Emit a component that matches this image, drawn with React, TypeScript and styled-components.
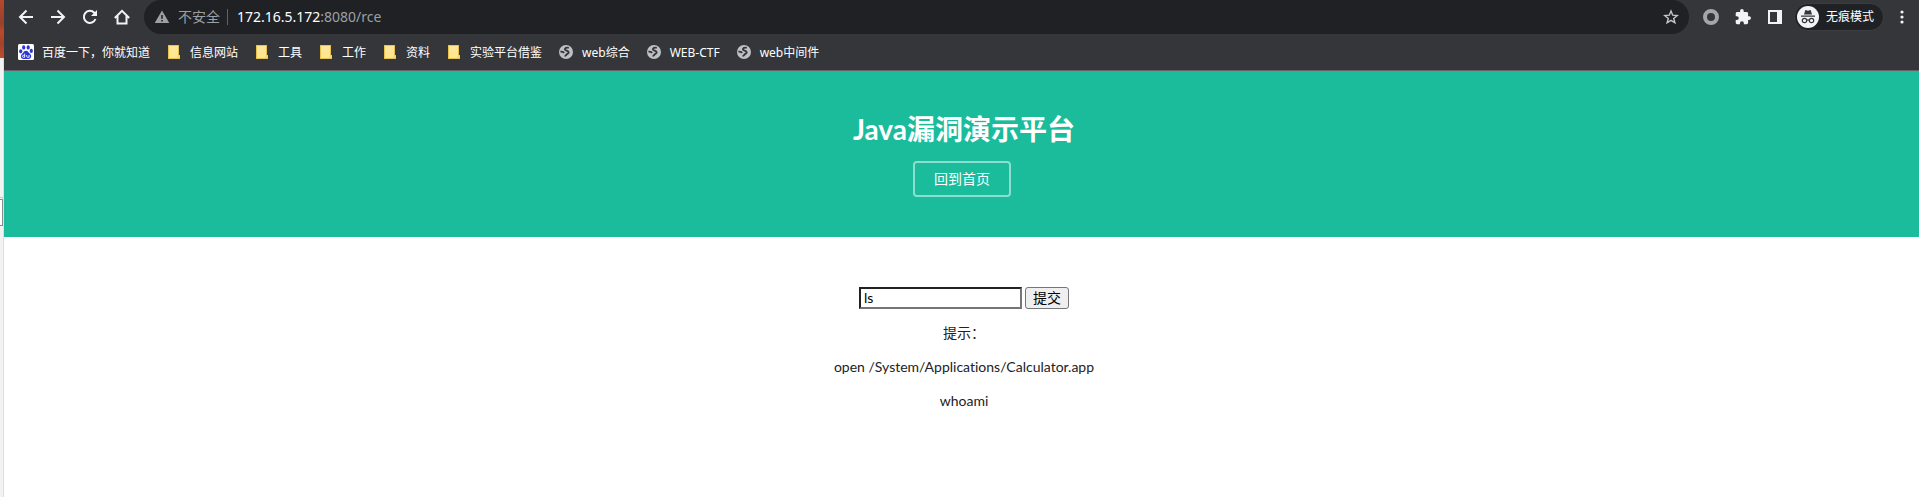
import React from "react";
import styled, { createGlobalStyle } from "styled-components";

const uiFont = `"Noto Sans", "Noto Sans CJK SC", sans-serif`;
const pageFont = `Lato, "Noto Sans CJK SC", sans-serif`;

const GlobalStyle = createGlobalStyle`
  * { box-sizing: border-box; }
  body { margin: 0; background: #fff; overflow-x: hidden; }
`;

const Desktop = styled.div`
  display: flex;
  min-height: 100vh;
`;

const BehindWindow = styled.div`
  flex: 0 0 4px;
  min-width: 0;
  background: linear-gradient(to right, #f2f2f2 3px, #dedede 3px);
`;

const BehindBanner = styled.div`
  height: 58px;
  background: linear-gradient(#b5482b, #98412b 40%, #b94a2c 55%, #a3432b 75%, #c14c2d);
`;

const BehindField = styled.div`
  margin-top: 139px;
  height: 27px;
  width: 3px;
  border-top: 1px solid #c8c8c8;
  padding-top: 1px;

  &::after {
    content: "";
    display: block;
    height: 25px;
    background: #fff;
    border: 1px solid #8a8a8a;
    border-left: 0;
  }
`;

const BrowserWindow = styled.div`
  flex: 1;
  min-width: 0;
  background: #fff;
`;

const Toolbar = styled.div`
  display: flex;
  align-items: center;
  height: 34px;
  background: #35363a;
  padding: 0 9px 0 14px;
`;

const NavButtons = styled.div`
  display: flex;
  gap: 16px;
  margin-right: 14px;
`;

const IconButton = styled.button`
  display: flex;
  align-items: center;
  justify-content: center;
  width: 16px;
  height: 16px;
  padding: 0;
  border: 0;
  background: none;
  color: #f1f3f4;
`;

const AddressBar = styled.div`
  flex: 1;
  display: flex;
  align-items: center;
  height: 34px;
  padding: 0 10px;
  border-radius: 17px;
  background: #202124;
  color: #9aa0a6;
  font: 14px/20px ${uiFont};
  white-space: nowrap;
`;

const SecurityLabel = styled.span`
  margin-left: 8px;
  padding-right: 7px;
`;

const Separator = styled.span`
  width: 1px;
  height: 16px;
  margin-right: 9px;
  background: #5f6368;
`;

const Url = styled.span`
  flex: 1;
`;

const Host = styled.span`
  color: #fff;
`;

const Extensions = styled.div`
  display: flex;
  gap: 16px;
  margin: 0 11px 0 14px;
`;

const IncognitoBadge = styled.button`
  display: flex;
  align-items: center;
  gap: 7px;
  height: 28px;
  margin-right: 10px;
  padding: 0 9px 0 2px;
  border: 1px solid #3c3d41;
  border-radius: 14px;
  background: #202124;
  color: #fff;
  font: 12px/16px ${uiFont};
  white-space: nowrap;
`;

const Bookmarks = styled.nav`
  display: flex;
  align-items: center;
  gap: 16px;
  height: 37px;
  padding: 0 14px;
  background: #35363a;
  border-bottom: 1px solid #66606a;
`;

const Bookmark = styled.a`
  display: flex;
  align-items: center;
  gap: 8px;
  color: #fff;
  font: 12px/18px ${uiFont};
  text-decoration: none;
  white-space: nowrap;
`;

const BookmarkLabel = styled.span`
  padding-top: 2px;
`;

const Hero = styled.header`
  display: flex;
  flex-direction: column;
  align-items: center;
  height: 166px;
  padding: 38px 0 0 5px;
  background: #1abc9c;
  color: #fff;
  font-family: ${pageFont};
`;

const Title = styled.h1`
  margin: 0 0 12px;
  font-size: 28px;
  line-height: 40px;
  font-weight: 700;
`;

const HomeLink = styled.a`
  margin-right: 4px;
  padding: 6px 19px;
  border: 2px solid rgba(255, 255, 255, 0.5);
  border-radius: 4px;
  color: #fff;
  font-size: 14px;
  line-height: 20px;
  text-decoration: none;
`;

const Content = styled.main`
  padding: 50px 0 0 5px;
  color: #222;
  font: 14px/20px ${pageFont};
  font-variant-ligatures: none;
  text-align: center;
`;

const CommandForm = styled.form`
  display: flex;
  justify-content: center;
  gap: 3px;
  margin-bottom: 14px;
`;

const CommandInput = styled.input`
  width: 163px;
  height: 22px;
  padding: 0 3px 1px;
  border: 2px inset #767676;
  background: #fff;
  color: #000;
  font: 14px/16px ${pageFont};
  outline: 0;
`;

const SubmitButton = styled.button`
  height: 22px;
  padding: 0 7px;
  border: 1px solid #767676;
  border-radius: 3px;
  background: #efefef;
  color: #000;
  font: 14px/18px ${pageFont};
`;

const Hint = styled.p`
  margin: 0 0 14px;
`;

const line = { fill: "none", stroke: "currentColor", strokeWidth: 2 };

const BackIcon = () => (
  <svg width="16" height="16" viewBox="0 0 16 16" {...line}><path d="M15 8H2.5M8.5 1.5 2 8l6.500 6.500" /></svg>
);
const ForwardIcon = () => (
  <svg width="16" height="16" viewBox="0 0 16 16" {...line}><path d="M1 8h12.500M7.500 1.500 14 8l-6.500 6.500" /></svg>
);
const ReloadIcon = () => (
  <svg width="16" height="16" viewBox="0 0 16 16" {...line}>
    <path d="M13.500 10A6 6 0 1 1 12.300 3.800L14 5.500" />
    <path d="M15 1v6H9z" fill="currentColor" stroke="none" />
  </svg>
);
const HomeIcon = () => (
  <svg width="16" height="16" viewBox="0 0 16 16" {...line}><path d="M.8 9 8 1.800 15.200 9M3.500 7v7.500h9V7" /></svg>
);
const WarningIcon = () => (
  <svg width="16" height="16" viewBox="0 0 16 16">
    <path d="M8 1.500 15.300 14H.7z" fill="#9aa0a6" />
    <path d="M7.200 6h1.600v3.800H7.200zM7.200 11h1.600v1.600H7.200z" fill="#202124" />
  </svg>
);
const StarIcon = () => (
  <svg width="16" height="16" viewBox="0 0 16 16" fill="none" stroke="#c4c7ca" strokeWidth="1.400">
    <path d="m8 2 1.700 4.200 4.500.3-3.500 2.900 1.200 4.400L8 11.400l-3.900 2.400 1.200-4.400L1.800 6.500l4.500-.3z" />
  </svg>
);
const RingIcon = () => (
  <svg width="16" height="16" viewBox="0 0 16 16"><circle cx="8" cy="8" r="6" fill="none" stroke="#a6a6a6" strokeWidth="4" /></svg>
);
const PuzzleIcon = () => (
  <svg width="16" height="16" viewBox="1 1 22 22" fill="#f1f3f4">
    <path d="M20.500 11H19V7c0-1.100-.9-2-2-2h-4V3.500a2.500 2.500 0 0 0-5 0V5H4c-1.100 0-2 .9-2 2v3.800h1.500a2.700 2.700 0 0 1 0 5.400H2V20c0 1.100.9 2 2 2h3.800v-1.500a2.700 2.700 0 0 1 5.400 0V22H17c1.100 0 2-.9 2-2v-4h1.500a2.500 2.500 0 0 0 0-5z" />
  </svg>
);
const PanelIcon = () => (
  <svg width="16" height="16" viewBox="0 0 16 16"><path fillRule="evenodd" fill="#f1f3f4" d="M1 1h14v14H1zM3 3v10h7V3z" /></svg>
);
const IncognitoIcon = () => (
  <svg width="22" height="22" viewBox="0 0 22 22">
    <circle cx="11" cy="11" r="11" fill="#f1f3f4" />
    <path d="M7 8.500 8.300 4l2.700.7 2.700-.7L15 8.500zM4 9.500h14v1.300H4z" fill="#35363a" />
    <g fill="none" stroke="#35363a" strokeWidth="1.200">
      <circle cx="7.500" cy="14.500" r="2.200" /><circle cx="14.500" cy="14.500" r="2.200" /><path d="M9.700 14.200q1.300-.8 2.600 0" />
    </g>
  </svg>
);
const MenuIcon = () => (
  <svg width="16" height="16" viewBox="0 0 16 16" fill="#f1f3f4">
    <circle cx="8" cy="3" r="1.600" /><circle cx="8" cy="8" r="1.600" /><circle cx="8" cy="13" r="1.600" />
  </svg>
);
const PawIcon = () => (
  <svg width="16" height="16" viewBox="0 0 16 16">
    <rect width="16" height="16" rx="1.500" fill="#fff" />
    <g fill="#2b36d9">
      <ellipse cx="2.700" cy="7.300" rx="1.600" ry="2.100" />
      <ellipse cx="5.700" cy="3.400" rx="1.600" ry="2.200" />
      <ellipse cx="10.200" cy="3.400" rx="1.600" ry="2.200" />
      <ellipse cx="13.300" cy="6.900" rx="1.600" ry="2.100" />
      <path d="M8 6.800c-2 0-2.500 1.900-4 3.200-1.900 1.700-1.300 4.800 1.300 5 1.800.1 3.600.1 5.400 0 2.600-.2 3.300-3.200 1.500-4.900C10.700 8.800 10 6.800 8 6.800z" />
    </g>
    <path d="M6.700 9.700v3.600H5.300c-1.200 0-1.200-2 0-2h1.400M8.700 11v1.500q0 .8.900.8h1.500V11" fill="none" stroke="#fff" strokeWidth=".9" />
  </svg>
);
const FolderIcon = () => (
  <svg width="16" height="16" viewBox="0 0 16 16">
    <path d="M2 1h11v10h1v4H2z" fill="#e9c24d" />
    <path d="M3 2h9v9.500l-1 2.500H3z" fill="#ffe694" />
    <path d="M12 11.500h1.500V14H11z" fill="#fbdc7c" />
  </svg>
);
const GlobeIcon = () => (
  <svg width="16" height="16" viewBox="0 0 16 16">
    <circle cx="8" cy="8" r="7" fill="#bdc1c6" />
    <path
      d="M10.800 3.800C8.500 3.200 6.600 4.200 7 5.600c.4 1.300 3.400.9 3.700 2.600.2 1.500-1.700 1.500-2.300 2.400-.5.800-.6 1.300-1.900 1.300M2.400 7.600c1.600-.1 2.800.2 3.800 1.200"
      fill="none"
      stroke="#35363a"
      strokeWidth="1.900"
    />
  </svg>
);

const bookmarks = [
  { label: "百度一下，你就知道", icon: PawIcon },
  { label: "信息网站", icon: FolderIcon },
  { label: "工具", icon: FolderIcon },
  { label: "工作", icon: FolderIcon },
  { label: "资料", icon: FolderIcon },
  { label: "实验平台借鉴", icon: FolderIcon },
  { label: "web综合", icon: GlobeIcon },
  { label: "WEB-CTF", icon: GlobeIcon },
  { label: "web中间件", icon: GlobeIcon },
];

export default function App() {
  return (
    <Desktop lang="zh-CN">
      <GlobalStyle />
      <BehindWindow>
        <BehindBanner />
        <BehindField />
      </BehindWindow>
      <BrowserWindow>
        <Toolbar>
          <NavButtons>
            <IconButton aria-label="后退"><BackIcon /></IconButton>
            <IconButton aria-label="前进"><ForwardIcon /></IconButton>
            <IconButton aria-label="重新加载"><ReloadIcon /></IconButton>
            <IconButton aria-label="主页"><HomeIcon /></IconButton>
          </NavButtons>
          <AddressBar>
            <WarningIcon />
            <SecurityLabel>不安全</SecurityLabel>
            <Separator />
            <Url><Host>172.16.5.172</Host>:8080/rce</Url>
            <IconButton aria-label="收藏"><StarIcon /></IconButton>
          </AddressBar>
          <Extensions>
            <IconButton aria-label="扩展"><RingIcon /></IconButton>
            <IconButton aria-label="扩展程序"><PuzzleIcon /></IconButton>
            <IconButton aria-label="侧边栏"><PanelIcon /></IconButton>
          </Extensions>
          <IncognitoBadge><IncognitoIcon />无痕模式</IncognitoBadge>
          <IconButton aria-label="菜单"><MenuIcon /></IconButton>
        </Toolbar>
        <Bookmarks>
          {bookmarks.map(({ label, icon: Icon }) => (
            <Bookmark href="#" key={label}>
              <Icon />
              <BookmarkLabel>{label}</BookmarkLabel>
            </Bookmark>
          ))}
        </Bookmarks>
        <Hero>
          <Title>Java漏洞演示平台</Title>
          <HomeLink href="#">回到首页</HomeLink>
        </Hero>
        <Content>
          <CommandForm onSubmit={(e) => e.preventDefault()}>
            <CommandInput aria-label="命令" defaultValue="ls" />
            <SubmitButton type="submit">提交</SubmitButton>
          </CommandForm>
          <Hint>提示：</Hint>
          <Hint>open /System/Applications/Calculator.app</Hint>
          <Hint>whoami</Hint>
        </Content>
      </BrowserWindow>
    </Desktop>
  );
}
